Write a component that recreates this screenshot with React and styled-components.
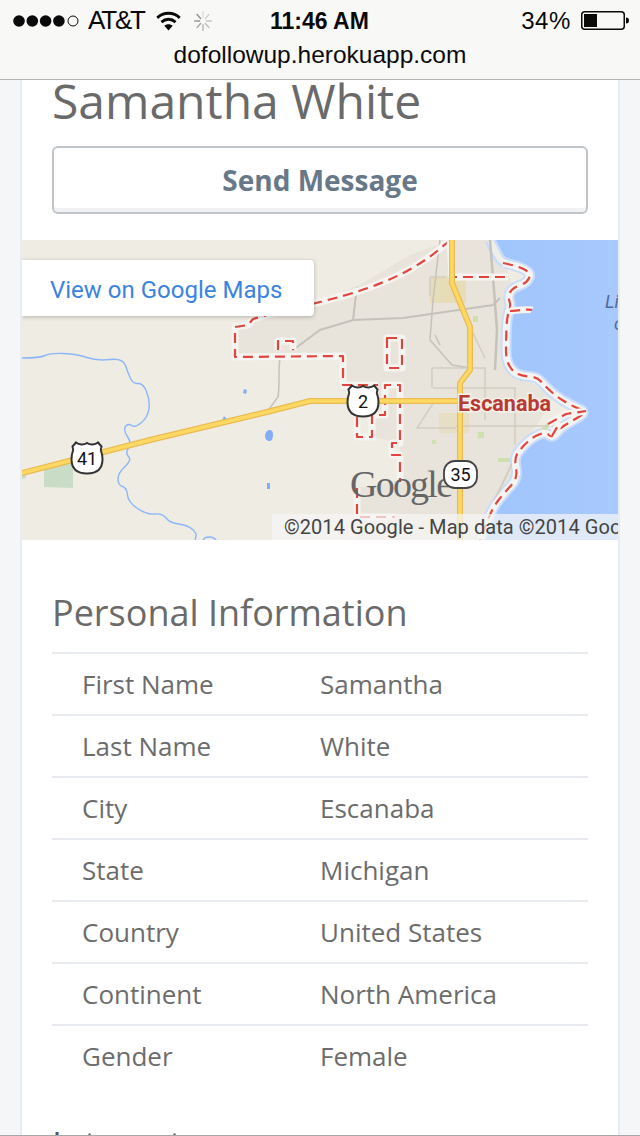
import React from 'react'
import styled, { createGlobalStyle } from 'styled-components'

const GlobalStyle = createGlobalStyle`
  html, body {
    margin: 0;
    padding: 0;
    height: 1136px;
    overflow: hidden;
    background: #f4f6f8;
    font-family: 'Open Sans', sans-serif;
  }
`

const Phone = styled.div`
  position: relative;
  width: 640px;
  height: 1136px;
  overflow: hidden;
  display: flex;
  flex-direction: column;
`

const Chrome = styled.header`
  flex: none;
  height: 79px;
  background: #f8f8f7;
  border-bottom: 1px solid #b4b4b4;
  font-family: 'Liberation Sans', sans-serif;
  color: #0a0a0a;
`

const StatusRow = styled.div`
  position: relative;
  height: 41px;
  display: flex;
  align-items: center;
  justify-content: space-between;
  padding: 0 11px 0 13px;
`

const StatusGroup = styled.div`
  display: flex;
  align-items: center;
`

const Carrier = styled.span`
  font-size: 26px;
  margin: 0 12px 0 8px;
  letter-spacing: -2.2px;
`

const Clock = styled.span`
  position: absolute;
  left: 270px;
  top: 6px;
  font-size: 23px;
  font-weight: 700;
  line-height: 30px;
`

const BatteryText = styled.span`
  font-size: 24px;
  margin-right: 10px;
  letter-spacing: 0.6px;
`

const Url = styled.div`
  text-align: center;
  font-size: 24.5px;
  line-height: 28px;
`

const Card = styled.main`
  flex: 1;
  box-sizing: border-box;
  width: 600px;
  margin-left: 20px;
  background: #fff;
  border-left: 2px solid #e8ebef;
  border-right: 2px solid #e8ebef;
  color: #6c6c6c;
`

const Intro = styled.section`
  padding: 0 30px 26px;
`

const Name = styled.h1`
  margin: 0;
  font-size: 48px;
  font-weight: 400;
  line-height: 42px;
  color: #6a6a6a;
`

const MessageButton = styled.button`
  display: block;
  width: 100%;
  height: 68px;
  margin-top: 24px;
  background: #fff;
  border: 2px solid #bfc5cb;
  border-radius: 6px;
  box-shadow: inset 0 -4px 0 #f0f1f2;
  font-family: inherit;
  font-size: 28px;
  font-weight: 700;
  color: #677888;
`

const MapWrap = styled.div`
  position: relative;
  height: 300px;
  overflow: hidden;
  background: #efece4;
`

const MapArt = styled.svg`
  display: block;
  width: 596px;
  height: 300px;
`

const MapLink = styled.a`
  position: absolute;
  left: 0;
  top: 20px;
  width: 292px;
  height: 56px;
  box-sizing: border-box;
  padding-left: 28px;
  background: #fff;
  border-radius: 0 4px 4px 0;
  box-shadow: 0 1px 4px rgba(0, 0, 0, 0.25);
  font-family: Roboto, sans-serif;
  font-size: 24px;
  line-height: 60px;
  color: #3a84df;
  white-space: nowrap;
`

const Attribution = styled.div`
  position: absolute;
  right: 0;
  bottom: 0;
  width: 346px;
  height: 26px;
  box-sizing: border-box;
  padding-left: 12px;
  overflow: hidden;
  white-space: nowrap;
  background: rgba(245, 245, 245, 0.72);
  font-family: Roboto, sans-serif;
  font-size: 20px;
  line-height: 27px;
  letter-spacing: 0.06px;
  color: #444;
`

const InfoSection = styled.section`
  padding: 52px 30px 0;
`

const SectionTitle = styled.h2`
  margin: 0 0 18px;
  font-size: 36px;
  font-weight: 400;
  line-height: 42px;
  color: #6a6a6a;
`

const InfoRow = styled.div`
  display: grid;
  grid-template-columns: 238px 1fr;
  height: 60px;
  padding-left: 30px;
  border-top: 2px solid #e8ebef;
  font-size: 26px;
  line-height: 60px;
`

const InterestsTitle = styled(SectionTitle)`
  margin-top: 38px;
  color: #555;
`

const BottomEdge = styled.div`
  position: absolute;
  left: 0;
  right: 0;
  bottom: 0;
  height: 1px;
  background: #a8a8a8;
`

const StatusGap = styled.span`
  width: ${props => props.$width}px;
`

const rows = [
  ['First Name', 'Samantha'],
  ['Last Name', 'White'],
  ['City', 'Escanaba'],
  ['State', 'Michigan'],
  ['Country', 'United States'],
  ['Continent', 'North America'],
  ['Gender', 'Female']
]

// rounds a list of [x, y] points off through their midpoints
const smooth = points => {
  let d = `M${points[0][0]} ${points[0][1]}`
  for (let i = 1; i < points.length - 1; i++) {
    const mx = (points[i][0] + points[i + 1][0]) / 2
    const my = (points[i][1] + points[i + 1][1]) / 2
    d += `Q${points[i][0]} ${points[i][1]} ${mx} ${my}`
  }
  const last = points[points.length - 1]
  return `${d}L${last[0]} ${last[1]}`
}

const shore = [
  [490, 240], [497, 255], [503, 263], [518, 266], [531, 273], [527, 283], [512, 288], [508, 297],
  [511, 306], [507, 316], [506, 340], [506, 360], [513, 372], [522, 376], [537, 377], [545, 386],
  [556, 396], [570, 405], [587, 412], [572, 421], [560, 428], [553, 438], [545, 432], [533, 437],
  [522, 447], [514, 458], [518, 478], [505, 492], [493, 507], [486, 525], [480, 540]
]

const river = [
  [22, 358], [40, 358], [50, 353], [77, 354], [97, 361], [123, 358], [128, 373], [133, 384],
  [143, 383], [150, 400], [148, 417], [135, 428], [128, 423], [123, 430], [132, 443], [125, 453],
  [132, 460], [118, 473], [118, 485], [127, 488], [128, 502], [147, 515], [162, 513], [170, 523],
  [187, 525], [197, 533], [195, 540]
]

const SignalDots = () => (
  <svg width="67" height="16" viewBox="0 0 67 16">
    {[6, 19.3, 32.6, 45.9].map(x => <circle key={x} cx={x} cy="8" r="5.8" fill="#0a0a0a" />)}
    <circle cx="60" cy="8" r="5" fill="none" stroke="#0a0a0a" strokeWidth="1" />
  </svg>
)

const Wifi = () => (
  <svg width="25" height="20" viewBox="0 0 30 22" fill="none" stroke="#0a0a0a" strokeWidth="3.2" preserveAspectRatio="none">
    <path d="M1.5 7.5C9 .8 21 .8 28.5 7.5" />
    <path d="M6.5 12.2c5-4.2 12-4.2 17 0" />
    <path d="M15 21.5l-5-5.2c2.8-2.2 7.2-2.2 10 0z" fill="#0a0a0a" stroke="none" />
  </svg>
)

const Spinner = () => (
  <svg width="20" height="22" viewBox="0 0 24 24" strokeWidth="1.6" strokeLinecap="round" preserveAspectRatio="none">
    {[0, 45, 90, 135, 180, 225, 270, 315].map((a, i) => (
      <line key={a} x1="12" y1="2" x2="12" y2="8" stroke="#888" strokeOpacity={0.25 + i * 0.1} transform={`rotate(${a} 12 12)`} />
    ))}
  </svg>
)

const Battery = () => (
  <svg width="48" height="19" viewBox="0 0 48 19">
    <rect x="0.75" y="0.75" width="42.5" height="17.5" rx="3" fill="none" stroke="#0a0a0a" strokeWidth="1.5" />
    <rect x="3" y="3" width="13" height="13" fill="#0a0a0a" />
    <path d="M45 6.5c2 0 3 1 3 3s-1 3-3 3z" fill="#0a0a0a" />
  </svg>
)

const UsShield = ({ cx, cy, label }) => (
  <g transform={`translate(${cx} ${cy})`}>
    <path
      d="M-11-15.500c3 2.500 8 2.500 11 .5 3 2 8 2 11-.5l3.500 4c-1 2.500-1 4 0 6 .8 2 1 4 1 6.500 0 8-4 14.500-15.500 14.500s-15.500-6.500-15.500-14.500c0-2.500.2-4.500 1-6.500 1-2 1-3.500 0-6z"
      fill="#fff"
      stroke="#333"
      strokeWidth="2"
    />
    <text x="0" y="7" textAnchor="middle" fontFamily="Roboto, sans-serif" fontSize="18" fill="#111">{label}</text>
  </g>
)

const Dashed = ({ d }) => (
  <g fill="none" strokeLinejoin="round">
    <path d={d} stroke="#f6f4f0" strokeWidth="7" />
    <path d={d} stroke="#e2453e" strokeWidth="2.2" strokeDasharray="10 6" />
  </g>
)

const MapDrawing = () => (
  <MapArt viewBox="22 240 596 300">
    <defs>
      <linearGradient id="lake" x1="0" x2="1" y1="0" y2="0">
        <stop offset="0" stopColor="#9fc5fc" />
        <stop offset="1" stopColor="#a8c9fd" />
      </linearGradient>
    </defs>
    <rect x="22" y="240" width="596" height="300" fill="#efece4" />
    {/* built up area round the town */}
    <path
      d="M235 327L248 323 320 302 363 283 410 255 450 240 500 240 515 300 508 360 535 385 553 400 520 450 500 510 480 540 357 540 357 488 400 480 400 443 372 437 372 385 343 385 343 357 235 357z"
      fill="#e8e4dc"
    />
    <path d={`${smooth(shore)}L618 540 618 240z`} fill="url(#lake)" />
    <path d={smooth(shore)} fill="none" stroke="#c8dcfb" strokeWidth="11" />
    <path d={smooth(shore)} fill="none" stroke="#f0eee8" strokeWidth="6" />

    {/* greens and small lakes */}
    <path d="M44 466L73 460 73 488 44 487z" fill="#c9dcc5" />
    <path d="M22 475L26 474 26 478 22 479z" fill="#c9dcc5" />
    <path d="M430 277h36v26h-36z" fill="#e6dcb8" />
    <path d="M439 413h30v20h-30z" fill="#e6dfc6" />
    <path d="M478 432h6v6h-6zM432 440h4v4h-4zM498 458h12v4h-12zM473 316h5v6h-5z" fill="#cfdfae" />
    <path d="M537 433l14-14 3 3-12 12z" fill="#cfdfae" />
    <path d="M267 431c3-2 6-1 6 3 0 4-1 7-3 7-3 0-5-2-5-5 0-2 1-4 2-5zM244 389l3 1-1 4-3-1zM224 416l3 3-5 2zM267 483l3 0 0 6-3 0z" fill="#82aef6" />

    {/* river */}
    <path d={smooth(river)} fill="none" stroke="#8cb6f8" strokeWidth="1.4" />
    <path d="M203 540c2-4 10-4 13 0" fill="none" stroke="#8cb6f8" strokeWidth="1.4" />

    {/* minor roads */}
    <g fill="none" stroke="#c4c2bb" strokeWidth="2">
      <path d="M293 350L320 330 353 320 403 318 493 305 500 298" />
      <path d="M353 320L356 295 358 287" />
      <path d="M280 358C278 370 280 385 278 397L267 412" strokeWidth="1.5" />
      <path d="M440 240L433 300 430 340 452 365 470 368M435 335L440 345" strokeWidth="1.5" />
      <path d="M490 240L494 290 497 330 495 370" strokeWidth="2.5" />
    </g>
    <g fill="none" stroke="#d2cdc0" strokeWidth="1.5">
      <path d="M430 277V296M430 277H446" />
      <path d="M432 368H485V420M432 368V388" />
      <path d="M433 388H515V445" />
      <path d="M434 402L417 428H456M456 426H555" />
      <path d="M470 327L485 358" />
      <path d="M517 453L490 510" strokeWidth="2" />
    </g>

    <Dashed d="M450 240C420 268 385 286 320 302M320 302L267 315 253 319 248 325 235 327 235 357 343 356 343 385 378 385" />
    <Dashed d="M278 350V341H293V350" />
    <Dashed d="M387 338H402V368H387z" />
    <Dashed d="M357 417V437H372V415H385V385H400V443H392V455H400V482" />
    <Dashed d="M357 488V517H395" />
    <Dashed d="M450 240L452 277H508" />
    <Dashed d={smooth(shore.slice(2))} />
    <Dashed d="M510 311C520 310 530 309 532 310" />
    <Dashed d="M548 424L566 414 586 411M552 436L560 422" />

    {/* highways */}
    <g fill="none" strokeLinejoin="round">
      <path d="M22 473L150 440 267 412 310 401 458 401" stroke="#e9bb52" strokeWidth="6" />
      <path d="M22 473L150 440 267 412 310 401 458 401" stroke="#fdd964" strokeWidth="3.5" />
      <path d="M452 240V283L470 327V370L460 383V540" stroke="#e9bb52" strokeWidth="6" />
      <path d="M452 240V283L470 327V370L460 383V540" stroke="#fdd964" strokeWidth="3.5" />
    </g>

    <text x="458" y="411" fontFamily="Roboto, sans-serif" fontSize="21.500" fontWeight="700" fill="#b83a32" stroke="#f4f1ea" strokeWidth="3" paintOrder="stroke">Escanaba</text>
    <text x="350" y="497" fontFamily="'Liberation Serif', serif" fontSize="38" fill="#666" textLength="103">Google</text>

    <UsShield cx={87} cy={458} label="41" />
    <UsShield cx={363} cy={401} label="2" />
    <rect x="444" y="461" width="33" height="27" rx="11" fill="#fff" stroke="#444" strokeWidth="1.8" />
    <text x="460.500" y="481" textAnchor="middle" fontFamily="Roboto, sans-serif" fontSize="18" fill="#111">35</text>

    <text x="605" y="308" fontFamily="Roboto, sans-serif" fontSize="18" fontStyle="italic" fill="#4a6c9c">Li</text>
    <text x="614" y="330" fontFamily="Roboto, sans-serif" fontSize="18" fontStyle="italic" fill="#4a6c9c">c</text>
  </MapArt>
)

export default function App() {
  return (
    <Phone>
      <GlobalStyle />
      <Chrome>
        <StatusRow>
          <StatusGroup>
            <SignalDots />
            <Carrier>AT&amp;T</Carrier>
            <Wifi />
            <StatusGap $width={12} />
            <Spinner />
          </StatusGroup>
          <Clock>11:46 AM</Clock>
          <StatusGroup>
            <BatteryText>34%</BatteryText>
            <Battery />
          </StatusGroup>
        </StatusRow>
        <Url>dofollowup.herokuapp.com</Url>
      </Chrome>
      <Card>
        <Intro>
          <Name>Samantha White</Name>
          <MessageButton>Send Message</MessageButton>
        </Intro>
        <MapWrap>
          <MapDrawing />
          <MapLink>View on Google Maps</MapLink>
          <Attribution>©2014 Google - Map data ©2014 Google</Attribution>
        </MapWrap>
        <InfoSection>
          <SectionTitle>Personal Information</SectionTitle>
          {rows.map(([label, value]) => (
            <InfoRow key={label}>
              <span>{label}</span>
              <span>{value}</span>
            </InfoRow>
          ))}
          <InterestsTitle>Interests</InterestsTitle>
        </InfoSection>
      </Card>
      <BottomEdge />
    </Phone>
  )
}
